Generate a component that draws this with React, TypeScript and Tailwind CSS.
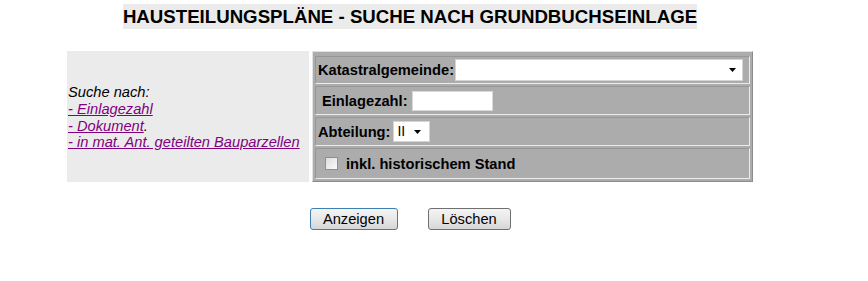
const Arrow = () => (
  <svg width="7" height="4" viewBox="0 0 7 4" className="block">
    <path d="M0 0h7L3.5 4z" fill="#000" />
  </svg>
)

const rowCls =
  "flex items-center border border-t-[#979797] border-l-[#979797] border-b-[#ececec] border-r-[#ececec] px-[2px]"

const App = () => {
  return (
    <div className="bg-white w-[868px] h-[281px] font-['Liberation_Sans',Arial,sans-serif] text-black">
      <div className="ml-[67px] w-[686px]">
        {/* Title */}
        <div className="pt-[4px] text-center">
          <span className="inline-block bg-[#ebebeb] font-bold text-[18.67px] leading-[25px]">
            HAUSTEILUNGSPLÄNE - SUCHE NACH GRUNDBUCHSEINLAGE
          </span>
        </div>

        {/* Search table */}
        <div className="mt-[21px] flex gap-[3px]">
          <div className="w-[242px] bg-[#ebebeb] flex items-center pl-[1px]">
            <div className="italic text-[14.67px] leading-[16.6px] pt-[2px]">
              <div>Suche nach:</div>
              <div>
                <a href="#" className="text-[#800080] underline">- Einlagezahl</a>
              </div>
              <div>
                <a href="#" className="text-[#800080] underline">- Dokument</a>.
              </div>
              <div>
                <a href="#" className="text-[#800080] underline">- in mat. Ant. geteilten Bauparzellen</a>
              </div>
            </div>
          </div>

          <div className="w-[441px] bg-[#acacac] border border-t-[#e2e2e2] border-l-[#e2e2e2] border-b-[#8c8c8c] border-r-[#8c8c8c] px-[2px] pt-[4px] pb-[2px] flex flex-col gap-[2px] font-bold text-[14.67px]">
            <div className={`${rowCls} h-[28px]`}>
              <span>Katastralgemeinde:</span>
              <div className="ml-[1px] w-[288px] h-[22px] bg-white border border-[#d4d4d4] flex items-center justify-end pr-[6px]">
                <Arrow />
              </div>
            </div>
            <div className={`${rowCls} h-[29px]`}>
              <span className="ml-[4px]">Einlagezahl:</span>
              <div className="ml-[4px] w-[81px] h-[20px] bg-white border border-[#d9d9d9]" />
            </div>
            <div className={`${rowCls} h-[29px]`}>
              <span>Abteilung:</span>
              <div className="ml-[3px] w-[37px] h-[21px] bg-white border border-[#d4d4d4] flex items-center pl-[3px] pr-[8px] justify-between font-normal text-[14px]">
                <span>II</span>
                <Arrow />
              </div>
            </div>
            <div className={`${rowCls} h-[31px]`}>
              <span className="ml-[7px] w-[13px] h-[13px] border border-[#8f8f8f] bg-gradient-to-br from-[#dcdcdc] to-[#fbfbfb] inline-block" />
              <span className="ml-[8px]">inkl. historischem Stand</span>
            </div>
          </div>
        </div>

        {/* Buttons */}
        <div className="mt-[26px] flex justify-center gap-[30px] text-[14.67px]">
          <button className="w-[88px] h-[22px] rounded-[3px] border border-[#3c7fb1] bg-gradient-to-b from-[#f4f4f4] via-[#e8e8e8] to-[#d6d6d6] leading-none">
            Anzeigen
          </button>
          <button className="w-[83px] h-[22px] rounded-[3px] border border-[#707070] bg-gradient-to-b from-[#f4f4f4] via-[#e8e8e8] to-[#d6d6d6] leading-none">
            Löschen
          </button>
        </div>
      </div>
    </div>
  )
}

export default App
